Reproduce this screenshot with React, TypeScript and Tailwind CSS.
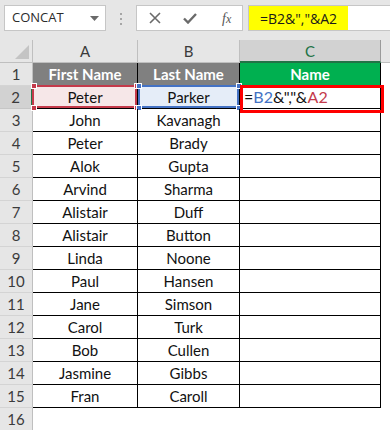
import type { ReactNode } from 'react'

const names: [string, string][] = [
  ['Peter', 'Parker'],
  ['John', 'Kavanagh'],
  ['Peter', 'Brady'],
  ['Alok', 'Gupta'],
  ['Arvind', 'Sharma'],
  ['Alistair', 'Duff'],
  ['Alistair', 'Button'],
  ['Linda', 'Noone'],
  ['Paul', 'Hansen'],
  ['Jane', 'Simson'],
  ['Carol', 'Turk'],
  ['Bob', 'Cullen'],
  ['Jasmine', 'Gibbs'],
  ['Fran', 'Caroll'],
]

const cellFont = { fontFamily: 'Lato, "Liberation Sans", sans-serif' }

function RowHead({ n, active }: { n: number; active?: boolean }) {
  return (
    <div
      className={
        'flex h-[23px] items-center justify-center border-b border-r text-[15px] text-[#3b3b3b] ' +
        (active
          ? 'border-b-[#c6c6c6] border-r-[#217346] border-r-2 bg-[#d2d2d2]'
          : 'border-b-[#d4d4d4] border-r-[#bfbfbf] bg-[#e6e6e6]')
      }
    >
      {n}
    </div>
  )
}

function Handles({ color }: { color: string }) {
  const sq = 'absolute h-[6px] w-[6px] border border-white ' + color
  return (
    <>
      <span className={sq + ' -left-[2px] -top-[3px]'} />
      <span className={sq + ' -right-[3px] -top-[3px]'} />
      <span className={sq + ' -bottom-[3px] -left-[2px]'} />
      <span className={sq + ' -bottom-[3px] -right-[3px]'} />
    </>
  )
}

function Cell({ children, className = '' }: { children?: ReactNode; className?: string }) {
  return (
    <div
      className={
        'relative flex h-[23px] items-center justify-center border-b border-r border-black text-[15px] text-[#111] ' +
        className
      }
    >
      {children}
    </div>
  )
}

export default function App() {
  return (
    <div className="relative h-[430px] w-[390px] overflow-hidden bg-white" style={cellFont}>
      {/* formula bar */}
      <div
        className="flex h-[40px] items-start bg-[#e6e6e6] pt-[5px]"
        style={{ fontFamily: '"Open Sans", "Noto Sans", sans-serif' }}
      >
        <div className="ml-[4px] flex h-[26px] w-[102px] items-center justify-between border border-[#c6c6c6] bg-white pl-[7px] pr-[6px] text-[13px] text-[#2b2b2b]">
          <span>CONCAT</span>
          <svg width="9" height="5" viewBox="0 0 9 5">
            <path d="M0 0h9L4.5 5z" fill="#6a6a6a" />
          </svg>
        </div>
        <div className="ml-[14px] mt-[8px] flex flex-col gap-[3px]">
          <span className="h-[2px] w-[2px] bg-[#a6a6a6]" />
          <span className="h-[2px] w-[2px] bg-[#a6a6a6]" />
          <span className="h-[2px] w-[2px] bg-[#a6a6a6]" />
        </div>
        <div className="ml-[14px] flex h-[26px] w-[107px] items-center border border-[#c6c6c6] bg-white">
          <svg className="ml-[12px]" width="12" height="12" viewBox="0 0 12 12">
            <path d="M1 1l10 10M11 1L1 11" stroke="#6a6a6a" strokeWidth="1.6" />
          </svg>
          <svg className="ml-[22px]" width="14" height="11" viewBox="0 0 14 11">
            <path d="M1 5.5l4 4L13 1" stroke="#6a6a6a" strokeWidth="2.4" fill="none" />
          </svg>
          <span
            className="ml-[25px] text-[14px] italic text-[#555]"
            style={{ fontFamily: '"Liberation Serif", serif' }}
          >
            f<span className="text-[12px]">x</span>
          </span>
        </div>
        <div className="ml-[5px] flex h-[26px] flex-1 border border-r-0 border-[#c6c6c6] bg-white">
          <div className="flex h-full w-[99px] items-center bg-[#ffff00] pl-[11px] text-[14px] text-[#1a1a1a]">
            =B2&amp;","&amp;A2
          </div>
        </div>
      </div>

      {/* grid */}
      <div className="grid grid-cols-[33px_105px_102px_141px_9px]">
        {/* column headers */}
        <div className="relative h-[23px] border-b border-r border-[#bfbfbf] bg-[#e6e6e6]">
          <svg className="absolute bottom-[3px] right-[3px]" width="14" height="14" viewBox="0 0 14 14">
            <path d="M14 0v14H0z" fill="#c4c4c4" />
          </svg>
        </div>
        <div className="flex h-[23px] items-center justify-center border-b border-r border-[#bfbfbf] bg-[#e6e6e6] text-[15px] text-[#3b3b3b]">
          A
        </div>
        <div className="flex h-[23px] items-center justify-center border-b border-r border-[#bfbfbf] bg-[#e6e6e6] text-[15px] text-[#3b3b3b]">
          B
        </div>
        <div className="flex h-[23px] items-center justify-center border-b-2 border-r border-b-[#217346] border-r-[#9b9b9b] bg-[#d2d2d2] pt-[1px] text-[15px] text-[#217346]">
          C
        </div>
        <div className="h-[23px] border-b border-[#bfbfbf] bg-[#e6e6e6]" />

        {/* row 1 */}
        <RowHead n={1} />
        <Cell className="bg-[#808080] font-bold text-white">First Name</Cell>
        <Cell className="bg-[#808080] font-bold text-white">Last Name</Cell>
        <Cell className="bg-[#00b050] font-bold text-white">Name</Cell>
        <div />

        {/* row 2 */}
        <RowHead n={2} active />
        <Cell className="bg-[#f6e7e8]">
          <span className="absolute -top-[1px] bottom-0 -left-[1px] right-0 border-2 border-[#c43a4b]" />
          <Handles color="bg-[#c43a4b]" />
          <span className="relative">{names[0][0]}</span>
        </Cell>
        <Cell className="bg-[#e5edf8]">
          <span className="absolute -top-[1px] bottom-0 left-0 right-0 border-2 border-[#4472c4]" />
          <Handles color="bg-[#4472c4]" />
          <span className="relative">{names[0][1]}</span>
        </Cell>
        <Cell className="justify-start pl-[4px] text-[16px]">
          <span>
            =<span className="text-[#4472c4]">B2</span>&amp;","&amp;<span className="text-[#c43a4b]">A2</span>
          </span>
        </Cell>
        <div />

        {names.slice(1).map(([first, last], i) => (
          <div key={i} className="contents">
            <RowHead n={i + 3} />
            <Cell>{first}</Cell>
            <Cell>{last}</Cell>
            <Cell />
            <div />
          </div>
        ))}

        <RowHead n={16} />
        <div />
        <div />
        <div />
        <div />
      </div>

      {/* annotation box around C2 */}
      <div className="absolute left-[240px] top-[85px] h-[28px] w-[144px] border-[3px] border-[#ff0000]" />
    </div>
  )
}
